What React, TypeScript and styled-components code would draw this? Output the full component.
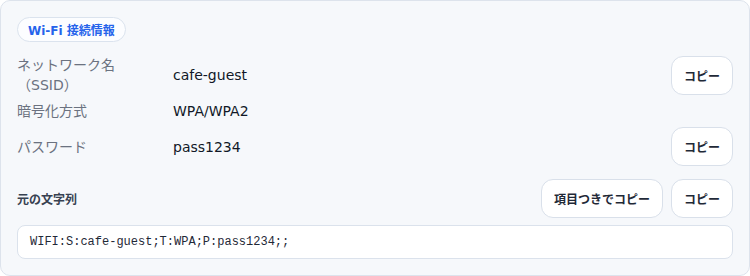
import React from "react";
import styled, { createGlobalStyle } from "styled-components";

const Global = createGlobalStyle`
  html, body { margin: 0; padding: 0; background: #ffffff; }
  body { font-family: "DejaVu Sans", "Noto Sans CJK JP", sans-serif; }
  * { box-sizing: border-box; }
`;

const Card = styled.section`
  width: 750px;
  height: 276px;
  background: #f6f8fb;
  border: 1px solid #dde3ec;
  border-radius: 10px;
  padding: 16px 16px 16px 16px;
  display: flex;
  flex-direction: column;
`;

const Badge = styled.span`
  align-self: flex-start;
  display: inline-flex;
  align-items: center;
  height: 25px;
  padding: 0 10px;
  border-radius: 999px;
  background: #fcfdff;
  border: 1px solid #dbe3ee;
  color: #2563eb;
  font-size: 12px;
  font-weight: 700;
  font-family: "DejaVu Sans", "Noto Sans CJK JP", sans-serif;
`;

const Fields = styled.div`
  margin-top: 13px;
  display: grid;
  grid-template-columns: 140px 1fr auto;
  column-gap: 16px;
  row-gap: 5px;
  align-items: center;
`;

const Label = styled.div`
  color: #6b7280;
  font-size: 14px;
  line-height: 20px;
  font-family: "DejaVu Sans", "Noto Sans CJK JP", sans-serif;
`;

const Value = styled.div`
  color: #111827;
  font-size: 14px;
  line-height: 22px;
  font-family: "DejaVu Sans", "Noto Sans CJK JP", sans-serif;
`;

const Button = styled.button`
  height: 39px;
  padding: 0 12px;
  background: #ffffff;
  border: 1px solid #d9e0ea;
  border-radius: 12px;
  color: #1f2937;
  font-size: 12px;
  font-weight: 700;
  font-family: "Noto Sans CJK JP", sans-serif;
  cursor: pointer;
`;

const Empty = styled.div``;

const SourceHeader = styled.div`
  margin-top: 13px;
  display: flex;
  align-items: center;
  gap: 8px;
`;

const SourceTitle = styled.div`
  flex: 1;
  color: #374151;
  font-size: 12px;
  font-weight: 700;
  font-family: "Noto Sans CJK JP", sans-serif;
`;

const RawBox = styled.div`
  margin-top: 7px;
  height: 34px;
  display: flex;
  align-items: center;
  padding: 0 12px;
  background: #ffffff;
  border: 1px solid #dbe2ec;
  border-radius: 8px;
  color: #1f2937;
  font-size: 12px;
  font-family: "Liberation Mono", monospace;
`;

export default function App() {
  return (
    <>
      <Global />
      <Card>
        <Badge>Wi-Fi 接続情報</Badge>
        <Fields>
          <Label>ネットワーク名（SSID）</Label>
          <Value>cafe-guest</Value>
          <Button>コピー</Button>

          <Label>暗号化方式</Label>
          <Value>WPA/WPA2</Value>
          <Empty />

          <Label>パスワード</Label>
          <Value>pass1234</Value>
          <Button>コピー</Button>
        </Fields>
        <SourceHeader>
          <SourceTitle>元の文字列</SourceTitle>
          <Button>項目つきでコピー</Button>
          <Button>コピー</Button>
        </SourceHeader>
        <RawBox>WIFI:S:cafe-guest;T:WPA;P:pass1234;;</RawBox>
      </Card>
    </>
  );
}
